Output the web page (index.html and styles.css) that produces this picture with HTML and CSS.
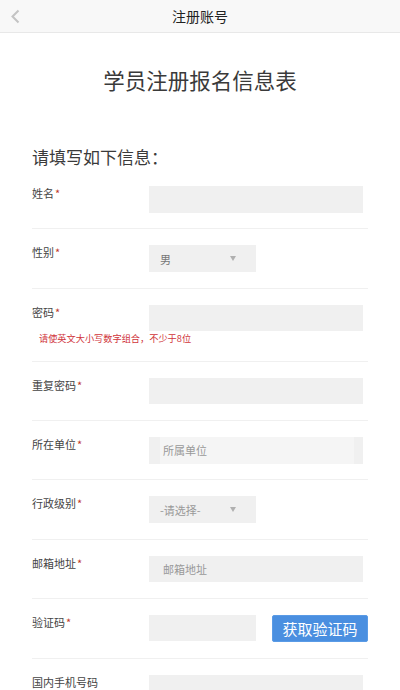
FILE: index.html
```html
<!DOCTYPE html>
<html lang="zh-CN">
<head>
<meta charset="utf-8">
<title>注册账号</title>
<link rel="stylesheet" href="styles.css">
</head>
<body>
<header class="topbar">
  <span class="back">
    <svg width="10" height="15" viewBox="0 0 10 15"><path d="M8.5 1.5 L2.5 7.5 L8.5 13.5" fill="none" stroke="#c4c4c4" stroke-width="2"/></svg>
  </span>
  <h1 class="topbar-title">注册账号</h1>
  <span></span>
</header>
<main class="page">
  <h2 class="form-title">学员注册报名信息表</h2>
  <section class="form">
    <h3 class="form-heading">请填写如下信息：</h3>
    <div class="row">
      <div class="line">
        <label class="label">姓名<span class="req">*</span></label>
        <div class="field"></div>
      </div>
    </div>
    <div class="row">
      <div class="line">
        <label class="label">性别<span class="req">*</span></label>
        <div class="select"><span>男</span><i class="caret"></i></div>
      </div>
    </div>
    <div class="row">
      <div class="line">
        <label class="label">密码<span class="req">*</span></label>
        <div class="field"></div>
      </div>
      <p class="hint">请使英文大小写数字组合，不少于8位</p>
    </div>
    <div class="row">
      <div class="line">
        <label class="label">重复密码<span class="req">*</span></label>
        <div class="field"></div>
      </div>
    </div>
    <div class="row">
      <div class="line">
        <label class="label">所在单位<span class="req">*</span></label>
        <div class="field field-framed"><span class="inner placeholder">所属单位</span></div>
      </div>
    </div>
    <div class="row">
      <div class="line">
        <label class="label">行政级别<span class="req">*</span></label>
        <div class="select"><span class="placeholder-sel">-请选择-</span><i class="caret"></i></div>
      </div>
    </div>
    <div class="row">
      <div class="line">
        <label class="label">邮箱地址<span class="req">*</span></label>
        <div class="field"><span class="placeholder">邮箱地址</span></div>
      </div>
    </div>
    <div class="row">
      <div class="line">
        <label class="label">验证码<span class="req">*</span></label>
        <div class="field short"></div>
        <button class="code-btn">获取验证码</button>
      </div>
    </div>
    <div class="row">
      <div class="line">
        <label class="label">国内手机号码</label>
        <div class="field"></div>
      </div>
    </div>
  </section>
</main>
</body>
</html>
```
FILE: styles.css
```css
* { box-sizing: border-box; }
html, body {
  margin: 0;
  padding: 0;
  background: #fff;
  font-family: "Noto Sans CJK SC", "Noto Sans", sans-serif;
  color: #333;
}
.topbar {
  display: grid;
  grid-template-columns: 40px 1fr 40px;
  align-items: center;
  height: 33px;
  background: #f8f8f8;
  border-bottom: 1px solid #e8e8e8;
}
.back {
  display: flex;
  align-items: center;
  padding-left: 10px;
  height: 100%;
}
.back svg { display: block; }
.topbar-title {
  margin: 0;
  text-align: center;
  font-size: 14px;
  font-weight: normal;
  color: #222;
  line-height: 32px;
}
.page { padding: 0; }
.form-title {
  margin: 32px 0 0;
  text-align: center;
  font-size: 21.5px;
  font-weight: normal;
  line-height: 30px;
  color: #3a3a3a;
}
.form {
  padding: 0 32px;
}
.form-heading {
  margin: 49.5px 0 0;
  font-size: 17px;
  font-weight: normal;
  line-height: 24px;
  color: #3a3a3a;
}
.row {
  padding: 17.5px 0 15.75px;
  border-bottom: 1px solid #f0f0f0;
}
.row + .row { padding-top: 16px; }
.line {
  display: flex;
  align-items: flex-start;
}
.label {
  width: 117px;
  flex: none;
  font-size: 11px;
  line-height: 14px;
  color: #444;
}
.req { color: #c0392b; margin-left: 1px; }
.field {
  width: 214px;
  height: 26.5px;
  background: #f0f0f0;
  display: flex;
  align-items: center;
  padding-left: 14px;
}
.field.short { width: 107px; }
.field-framed {
  padding: 0 9px 0 11px;
  align-items: stretch;
}
.inner {
  flex: 1;
  background: #f5f5f5;
  display: flex;
  align-items: center;
  padding-left: 3px;
}
.placeholder {
  font-size: 11px;
  color: #999;
}
.select {
  width: 107px;
  height: 26.5px;
  background: #f0f0f0;
  display: flex;
  align-items: center;
  padding-left: 11px;
  position: relative;
  font-size: 11px;
  color: #777;
}
.placeholder-sel { color: #999; }
.caret {
  position: absolute;
  left: 81px;
  top: 11px;
  width: 0;
  height: 0;
  border-left: 3.5px solid transparent;
  border-right: 3.5px solid transparent;
  border-top: 5px solid #b0b0b0;
}
.hint {
  margin: 1px 0 0 7px;
  font-size: 9.2px;
  line-height: 13px;
  color: #d0343a;
}
.code-btn {
  margin-left: auto;
  width: 96px;
  height: 27px;
  border: 1px solid #5a9be6;
  border-radius: 2px;
  background: #4a8fe0;
  color: #fff;
  font-family: inherit;
  font-size: 15px;
  line-height: 25px;
  padding: 0;
}
```
